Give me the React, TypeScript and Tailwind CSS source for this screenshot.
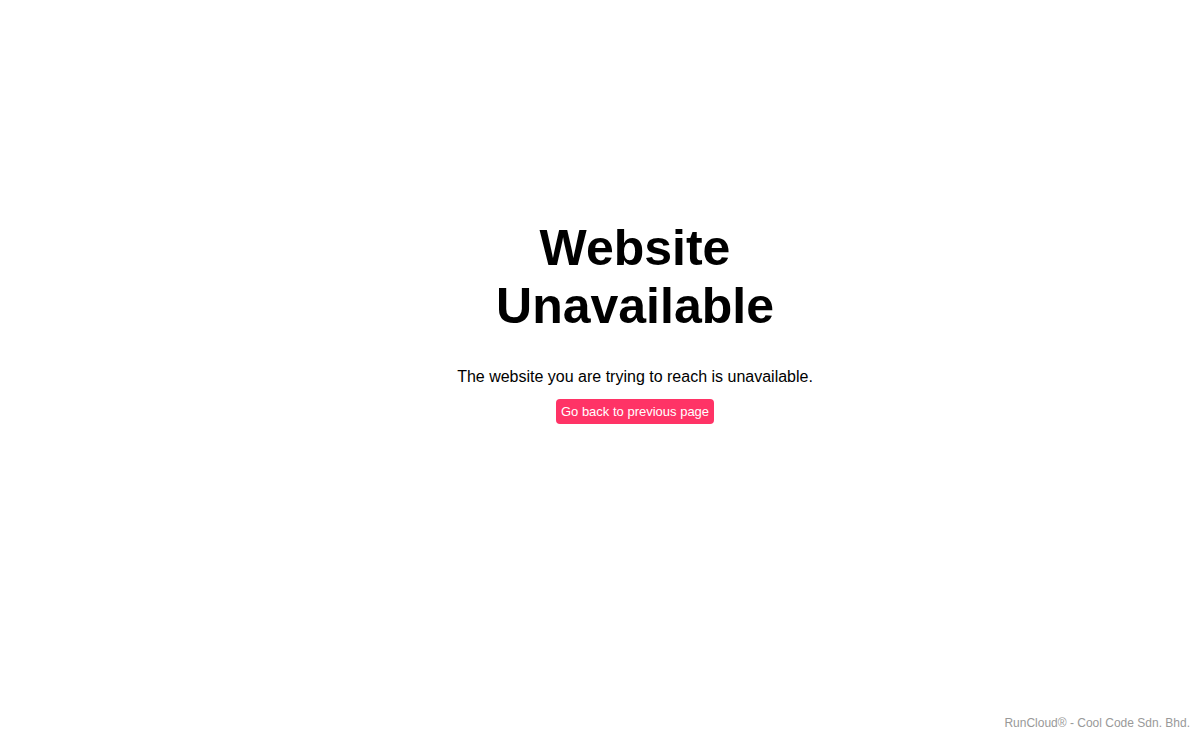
import React from 'react';

export default function App() {
  const goBack = () => {
    window.history.back();
  };

  return (
    <div className="flex min-h-screen flex-col bg-white font-['Liberation_Sans',Arial,sans-serif] text-black">
      {/* Message */}
      <main className="flex flex-1 flex-col items-center pt-[219px] pl-[70px] text-center">
        <h1 className="max-w-96 text-[50px] leading-[58px] font-bold">
          Website
          <br />
          Unavailable
        </h1>
        <p className="mt-8 text-base leading-5">The website you are trying to reach is unavailable.</p>
        <button
          type="button"
          onClick={goBack}
          className="mt-3 rounded bg-[#ff3366] p-[5px] text-[13px] leading-[15px] text-white"
        >
          Go back to previous page
        </button>
      </main>

      {/* Company */}
      <footer className="px-[10px] pb-[10px] text-right text-xs leading-[14px] text-[#999999]">
        RunCloud® - Cool Code Sdn. Bhd.
      </footer>
    </div>
  );
}
